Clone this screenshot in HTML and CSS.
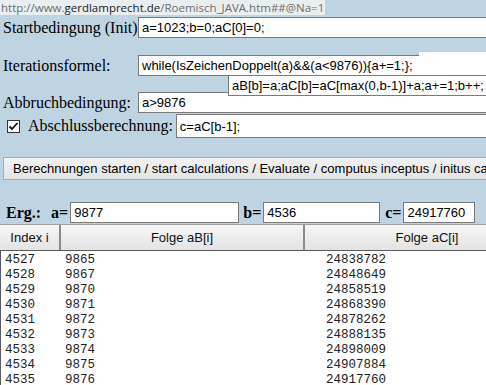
FILE: index.html
```html
<!DOCTYPE html>
<html lang="de">
<head>
    <meta charset="UTF-8">
    <title>Roemisch JAVA</title>
    <link rel="stylesheet" href="styles.css">
</head>
<body>
    <div class="url"><span>http://www.</span><b>gerdlamprecht.de</b><span>/Roemisch_JAVA.htm##@Na=1</span></div>

    <div class="form">
        <div class="row row-init">
            <label class="lbl">Startbedingung (Init)</label>
            <input class="fld" type="text" value="a=1023;b=0;aC[0]=0;">
        </div>

        <div class="row row-iter">
            <label class="lbl">Iterationsformel:</label>
            <input class="fld" type="text" value="while(IsZeichenDoppelt(a)&amp;&amp;(a&lt;9876)){a+=1;};">
            <span class="patch"></span>
        </div>
        <div class="row row-iter2">
            <input class="fld fld-ab" type="text" value="aB[b]=a;aC[b]=aC[max(0,b-1)]+a;a+=1;b++;">
        </div>

        <div class="row row-stop">
            <label class="lbl">Abbruchbedingung:</label>
            <input class="fld" type="text" value="a&gt;9876">
        </div>

        <div class="row row-final">
            <span class="chk"><svg width="11" height="11" viewBox="0 0 11 11"><path d="M1.5 5.5 L4 8 L9.5 2" fill="none" stroke="#111" stroke-width="1.8"/></svg></span>
            <label class="lbl">Abschlussberechnung:</label>
            <input class="fld" type="text" value="c=aC[b-1];">
        </div>

        <button class="btn">Berechnungen starten / start calculations / Evaluate / computus inceptus / initus calculi</button>

        <div class="row row-res">
            <b class="res-lbl erg">Erg.:</b>
            <b class="res-lbl">a=</b>
            <input class="fld res-a" type="text" value="9877">
            <b class="res-lbl">b=</b>
            <input class="fld res-b" type="text" value="4536">
            <b class="res-lbl">c=</b>
            <input class="fld res-c" type="text" value="24917760">
        </div>
    </div>

    <div class="grid">
        <div class="grid-head">
            <div class="col col-i">Index i</div>
            <div class="col col-b">Folge aB[i]</div>
            <div class="col col-c">Folge aC[i]</div>
        </div>
        <div class="grid-body" id="gridBody"></div>
    </div>

    <script>
        // letzte Zeilen der Folge
        var rows = [
            [4527, 9865, 24838782],
            [4528, 9867, 24848649],
            [4529, 9870, 24858519],
            [4530, 9871, 24868390],
            [4531, 9872, 24878262],
            [4532, 9873, 24888135],
            [4533, 9874, 24898009],
            [4534, 9875, 24907884],
            [4535, 9876, 24917760]
        ];
        var html = '';
        for (var i = 0; i < rows.length; i++) {
            html += '<div class="line"><span class="c-i">' + rows[i][0] + '</span><span class="c-b">' + rows[i][1] + '</span><span class="c-c">' + rows[i][2] + '</span></div>';
        }
        document.getElementById("gridBody").innerHTML = html;
    </script>
</body>
</html>
```

FILE: styles.css
```css
body {
    margin: 0;
    background-color: #bfd4e3;
    font-family: "Liberation Serif", serif;
    font-size: 16px;
    color: #000;
    overflow: hidden;
    width: 486px;
    height: 385px;
}
.url {
    width: fit-content;
    height: 15px;
    background-color: #e9eef1;
    font-family: "Open Sans", sans-serif;
    font-size: 11.5px;
    line-height: 15px;
    color: #6d6d6d;
    padding-left: 1px;
    padding-right: 1px;
    white-space: nowrap;
}
.url b {
    color: #1a1a1a;
    font-weight: normal;
}
.form {
    padding-left: 3px;
}
.row {
    display: flex;
    align-items: center;
    position: relative;
}
.lbl {
    width: 135px;
    flex: none;
    white-space: nowrap;
}
.fld {
    box-sizing: border-box;
    height: 21px;
    width: 420px;
    flex: none;
    margin: 0;
    padding: 0 3px;
    border: 1px solid #7a7a7a;
    background-color: #fff;
    font-family: "Liberation Sans", sans-serif;
    font-size: 13px;
    color: #000;
    outline: none;
}
.row-init {
    margin-top: 2px;
}
.row-iter {
    margin-top: 17px;
}
.patch {
    position: absolute;
    left: 416px;
    top: -3px;
    width: 80px;
    height: 4px;
    background-color: #fff;
}
.row-iter2 {
    margin-top: -1px;
    padding-left: 225px;
    z-index: 2;
}
.fld-ab {
    border-right: none;
    width: 300px;
}
.row-stop {
    margin-top: -4px;
    z-index: 1;
}
.row-final {
    margin-top: 1px;
}
.row-final .lbl {
    width: auto;
    margin-left: 8px;
    margin-right: 3px;
}
.row-final .fld {
    height: 24px;
}
.chk {
    display: flex;
    align-items: center;
    justify-content: center;
    box-sizing: border-box;
    margin-left: 4px;
    width: 13px;
    height: 13px;
    flex: none;
    border: 1px solid #333;
    background-color: #fff;
}
.btn {
    display: block;
    margin-top: 19px;
    width: 560px;
    height: 23px;
    padding: 0 0 0 9px;
    text-align: left;
    white-space: nowrap;
    border: 1px solid #acacac;
    border-radius: 0;
    background: linear-gradient(#f2f2f2, #e4e4e4);
    font-family: "Liberation Sans", sans-serif;
    font-size: 13px;
    color: #000;
}
.row-res {
    margin-top: 22px;
}
.res-lbl {
    font-size: 16px;
    margin-right: 2px;
}
.erg {
    margin-left: 3px;
    margin-right: 10px;
}
.res-a {
    width: 169px;
    margin-right: 4px;
}
.res-b {
    width: 117px;
    margin-right: 5px;
}
.res-c {
    width: 72px;
}
.grid {
    margin-top: 1px;
    width: 560px;
}
.grid-head {
    display: flex;
    height: 25px;
    border-top: 1px solid #a0a0a0;
    border-bottom: 1px solid #5a5a5a;
    background: linear-gradient(#f6f6f6, #e3e3e3);
    font-family: "Liberation Sans", sans-serif;
    font-size: 13px;
    color: #111;
}
.col {
    display: flex;
    align-items: center;
    justify-content: center;
    box-sizing: border-box;
}
.col-i {
    width: 61px;
    border-right: 2px solid #8a8a8a;
}
.col-b {
    width: 244px;
    border-right: 2px solid #8a8a8a;
}
.col-c {
    width: 244px;
}
.grid-body {
    background-color: #fff;
    border-left: 1px solid #5a5a5a;
    padding-top: 2px;
    height: 200px;
    font-family: "Liberation Mono", monospace;
    font-size: 12.5px;
    color: #222;
}
.line {
    display: flex;
    height: 15px;
    line-height: 15px;
}
.c-i {
    width: 60px;
    padding-left: 4px;
}
.c-b {
    width: 261px;
}
```
